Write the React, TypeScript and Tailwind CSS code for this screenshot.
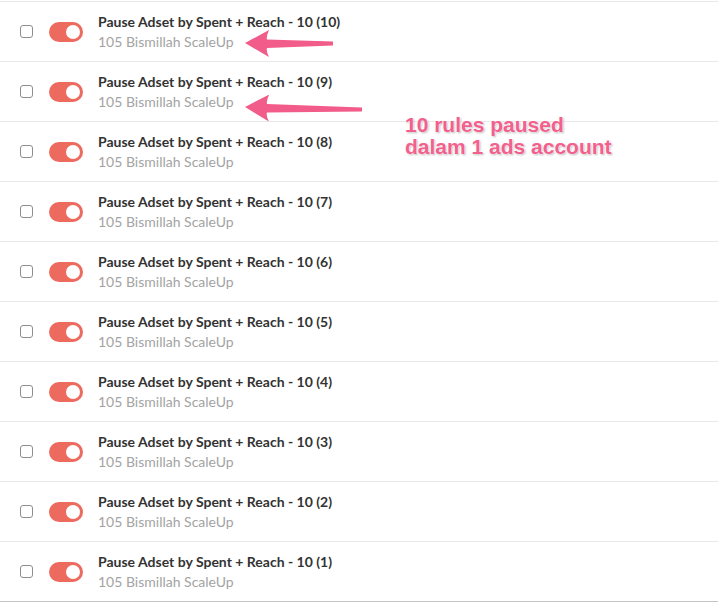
import React from "react";

const rows = [10, 9, 8, 7, 6, 5, 4, 3, 2, 1];

function Toggle() {
  return (
    <div className="relative h-[20px] w-[34px] shrink-0 rounded-full bg-[#ec6a5e]">
      <div className="absolute right-[3px] top-[3px] h-[14px] w-[14px] rounded-full bg-white" />
    </div>
  );
}

function Arrow({ len }: { len: number }) {
  return (
    <svg width={len + 2} height={28} viewBox={`0 0 ${len + 2} 28`} className="block">
      <path
        d={`M0 13 L24 0 Q21 7 22 9.5 L${len} 11.5 L${len} 15.5 L22 18 Q21 21 24 27 Z`}
        fill="#f25c8a"
      />
    </svg>
  );
}

export default function App() {
  return (
    <div
      className="relative h-[606px] w-[718px] overflow-hidden bg-white pt-px"
      style={{ fontFamily: "Lato, 'Noto Sans', sans-serif" }}
    >
      <div className="border-b border-[#c4c4c4]">
        {rows.map((n) => (
          <div key={n} className="flex h-[60px] items-center border-t border-[#e8e8e8] pl-5">
            <div className="h-[13px] w-[13px] shrink-0 rounded-[3px] border border-[#8e8e8e] bg-white" />
            <div className="ml-4">
              <Toggle />
            </div>
            <div className="ml-[15px] flex flex-col">
              <div className="text-[14px] font-bold leading-[20px] text-[#333333]">
                Pause Adset by Spent + Reach - 10 ({n})
              </div>
              <div className="text-[14px] leading-[20px] text-[#a3a3a3]">105 Bismillah ScaleUp</div>
            </div>
          </div>
        ))}
      </div>

      <div className="absolute left-[245px] top-[30px]">
        <Arrow len={88} />
      </div>
      <div className="absolute left-[245px] top-[94px] rotate-[1deg] origin-left">
        <Arrow len={117} />
      </div>

      <div
        className="absolute left-[405px] top-[114px] text-[21px] font-bold leading-[22px] text-[#f2608d]"
        style={{
          fontFamily: "'Liberation Sans', Arial, sans-serif",
          textShadow:
            "0 0 2px #fff, 0 0 2px #fff, 1px 1px 2px rgba(0,0,0,0.35)",
        }}
      >
        <div>10 rules paused</div>
        <div>dalam 1 ads account</div>
      </div>
    </div>
  );
}
